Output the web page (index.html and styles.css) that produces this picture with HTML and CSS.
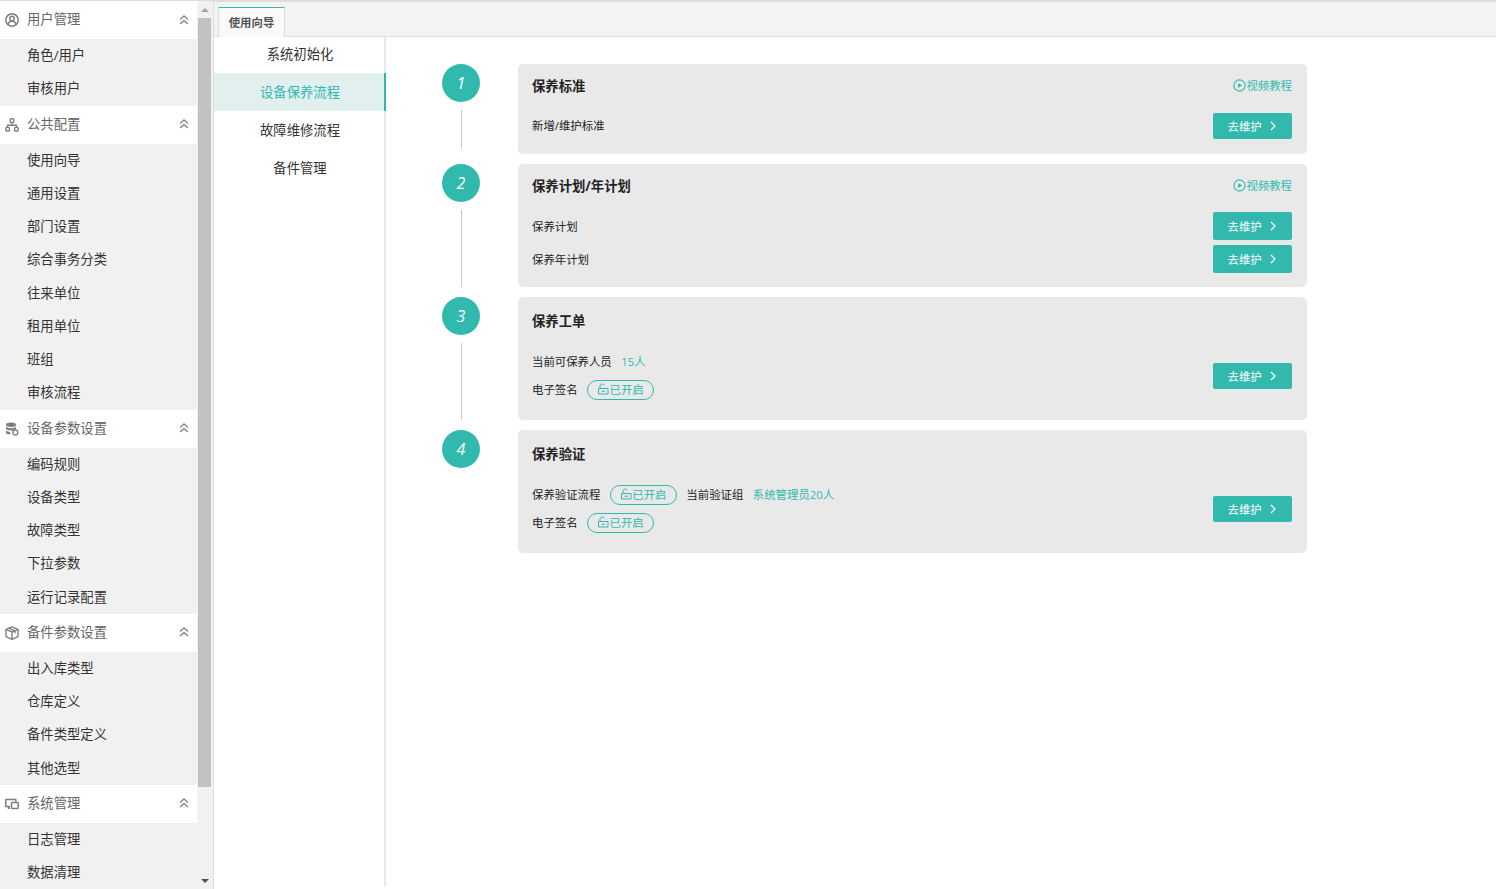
FILE: index.html
```html
<!DOCTYPE html>
<html>
<head>
    <title>使用向导</title>
    <link rel="stylesheet" href="styles.css">
</head>
<body>
    <svg class="defs">
        <symbol id="chev-up" viewBox="0 0 10 10"><path d="M1 4.500 5 1l4 3.500M1 9 5 5.500l4 3.500" fill="none" stroke="currentColor" stroke-width="1.500"/></symbol>
        <symbol id="chev-right" viewBox="0 0 6 10"><path d="M1 1l4 4-4 4" fill="none" stroke="currentColor" stroke-width="1.200"/></symbol>
        <symbol id="play" viewBox="0 0 14 14"><circle cx="7" cy="7" r="6" fill="none" stroke="currentColor" stroke-width="1.200"/><path d="M5.500 4.200 9.800 7l-4.300 2.800z" fill="currentColor"/></symbol>
        <symbol id="lock" viewBox="0 0 12 12"><path d="M3 5.500V3.200C3 1.800 4 1 5.200 1c1 0 1.800.5 2.100 1.400M1.500 5.500h9.500v5.500H1.500zM4.500 8.200h3.500" fill="none" stroke="currentColor" stroke-width="1"/></symbol>
    </svg>
    <div class="app">
        <aside class="sidebar">
            <nav class="menu">
                <div class="menu-head">
                    <svg class="menu-icon" viewBox="0 0 14 14"><circle cx="7" cy="7" r="6.200" fill="none" stroke="currentColor" stroke-width="1.500"/><circle cx="7" cy="5.500" r="2.300" fill="none" stroke="currentColor" stroke-width="1.400"/><path d="M3 12c.3-2.500 1.800-3.800 4-3.800s3.700 1.300 4 3.800" fill="none" stroke="currentColor" stroke-width="1.400"/></svg>
                    <span>用户管理</span>
                    <svg class="menu-chev"><use href="#chev-up"/></svg>
                </div>
                <a class="menu-item">角色/用户</a>
                <a class="menu-item">审核用户</a>

                <div class="menu-head">
                    <svg class="menu-icon" viewBox="0 0 14 14"><g fill="none" stroke="currentColor" stroke-width="1.400"><rect x="5.200" y=".8" width="3.600" height="3.600" rx=".8"/><rect x=".8" y="9.400" width="3.600" height="3.600" rx=".8"/><rect x="9.600" y="9.400" width="3.600" height="3.600" rx=".8"/><path d="M7 4.400v2.800M2.600 9.400V7.200h8.800v2.200"/></g></svg>
                    <span>公共配置</span>
                    <svg class="menu-chev"><use href="#chev-up"/></svg>
                </div>
                <a class="menu-item">使用向导</a>
                <a class="menu-item">通用设置</a>
                <a class="menu-item">部门设置</a>
                <a class="menu-item">综合事务分类</a>
                <a class="menu-item">往来单位</a>
                <a class="menu-item">租用单位</a>
                <a class="menu-item">班组</a>
                <a class="menu-item">审核流程</a>

                <div class="menu-head">
                    <svg class="menu-icon" viewBox="0 0 14 14"><ellipse cx="6" cy="2.800" rx="5" ry="2.200" fill="currentColor"/><path d="M1 4.600v2c0 1.200 2.200 2 5 2 .8 0 1.400 0 2-.2.600-.8 1.600-1.200 3-1.100V4.600c-.8 1-2.800 1.700-5 1.700s-4.200-.7-5-1.700zM1 8.400v2.400c0 1 1.800 1.700 4.400 1.800-.4-1-.4-1.900-.2-2.800C3.400 9.700 1.800 9.200 1 8.400z" fill="currentColor"/><circle cx="10.300" cy="10.500" r="2.500" fill="none" stroke="currentColor" stroke-width="1.300"/></svg>
                    <span>设备参数设置</span>
                    <svg class="menu-chev"><use href="#chev-up"/></svg>
                </div>
                <a class="menu-item">编码规则</a>
                <a class="menu-item">设备类型</a>
                <a class="menu-item">故障类型</a>
                <a class="menu-item">下拉参数</a>
                <a class="menu-item">运行记录配置</a>

                <div class="menu-head">
                    <svg class="menu-icon" viewBox="0 0 14 14"><g fill="none" stroke="currentColor" stroke-width="1.400" stroke-linejoin="round"><path d="M7 .8 13 3.400v7.200L7 13.300 1 10.600V3.400z"/><path d="M1 3.400 7 6l6-2.600M7 6v7.300M4 2.100l6 2.700v2.400"/></g></svg>
                    <span>备件参数设置</span>
                    <svg class="menu-chev"><use href="#chev-up"/></svg>
                </div>
                <a class="menu-item">出入库类型</a>
                <a class="menu-item">仓库定义</a>
                <a class="menu-item">备件类型定义</a>
                <a class="menu-item">其他选型</a>

                <div class="menu-head">
                    <svg class="menu-icon" viewBox="0 0 14 14"><g fill="none" stroke="currentColor" stroke-width="1.500"><path d="M5 9.500H.8V2.600h10v2.200M3.500 9.500v1.800H5"/><rect x="6.500" y="5.600" width="6.700" height="5.800" rx=".6"/></g></svg>
                    <span>系统管理</span>
                    <svg class="menu-chev"><use href="#chev-up"/></svg>
                </div>
                <a class="menu-item">日志管理</a>
                <a class="menu-item">数据清理</a>
            </nav>
            <div class="scrollbar">
                <div class="arrow arrow-up"></div>
                <div class="thumb"></div>
                <div class="arrow arrow-down"></div>
            </div>
        </aside>

        <main class="main">
            <div class="tabs">
                <div class="tab">使用向导</div>
            </div>
            <div class="workspace">
                <ul class="subnav">
                    <li>系统初始化</li>
                    <li class="active">设备保养流程</li>
                    <li>故障维修流程</li>
                    <li>备件管理</li>
                </ul>
                <div class="steps">
                    <section class="step">
                        <div class="rail"><div class="num">1</div><div class="line"></div></div>
                        <div class="card">
                            <div class="card-title"><h3>保养标准</h3><a class="video"><svg><use href="#play"/></svg>视频教程</a></div>
                            <div class="row"><span>新增/维护标准</span><button class="go">去维护<svg><use href="#chev-right"/></svg></button></div>
                        </div>
                    </section>
                    <section class="step">
                        <div class="rail"><div class="num">2</div><div class="line"></div></div>
                        <div class="card">
                            <div class="card-title"><h3>保养计划/年计划</h3><a class="video"><svg><use href="#play"/></svg>视频教程</a></div>
                            <div class="row"><span>保养计划</span><button class="go go-tall">去维护<svg><use href="#chev-right"/></svg></button></div>
                            <div class="row"><span>保养年计划</span><button class="go go-tall">去维护<svg><use href="#chev-right"/></svg></button></div>
                        </div>
                    </section>
                    <section class="step">
                        <div class="rail"><div class="num">3</div><div class="line"></div></div>
                        <div class="card">
                            <div class="card-title tall"><h3>保养工单</h3></div>
                            <div class="split">
                                <div class="info">
                                    <div class="info-row"><span>当前可保养人员</span><span class="teal">15人</span></div>
                                    <div class="info-row"><span>电子签名</span><span class="pill"><svg><use href="#lock"/></svg>已开启</span></div>
                                </div>
                                <button class="go">去维护<svg><use href="#chev-right"/></svg></button>
                            </div>
                        </div>
                    </section>
                    <section class="step">
                        <div class="rail"><div class="num">4</div></div>
                        <div class="card">
                            <div class="card-title tall"><h3>保养验证</h3></div>
                            <div class="split">
                                <div class="info">
                                    <div class="info-row"><span>保养验证流程</span><span class="pill"><svg><use href="#lock"/></svg>已开启</span><span>当前验证组</span><span class="teal">系统管理员20人</span></div>
                                    <div class="info-row"><span>电子签名</span><span class="pill"><svg><use href="#lock"/></svg>已开启</span></div>
                                </div>
                                <button class="go">去维护<svg><use href="#chev-right"/></svg></button>
                            </div>
                        </div>
                    </section>
                </div>
            </div>
        </main>
    </div>
</body>
</html>
```

FILE: styles.css
```css
:root {
    --teal: #31b9ae;
    --text: #333;
    --muted: #666;
    --line: #ddd;
}

* {
    box-sizing: border-box;
}

html, body {
    height: 100%;
}

body {
    margin: 0;
    background: #fff;
    color: var(--text);
    font-family: "Open Sans", "Noto Sans CJK SC", sans-serif;
    overflow: hidden;
}

.defs {
    display: none;
}

.app {
    display: flex;
    height: 889px;
    border-top: 1px solid var(--line);
}

/* left menu */
.sidebar {
    display: flex;
    width: 214px;
    flex: none;
    border-right: 1px solid var(--line);
}

.menu {
    width: 197px;
    flex: none;
    background: #f1f1f1;
    overflow: hidden;
}

.menu-head {
    display: flex;
    align-items: center;
    height: 38px;
    padding: 0 8px 0 5px;
    background: #fff;
    color: var(--muted);
    font-size: 13.330px;
}

.menu-head span {
    padding-bottom: 3px;
}

.menu-icon {
    width: 14px;
    height: 14px;
    margin-right: 8px;
    color: #808080;
}

.menu-chev {
    width: 10px;
    height: 10px;
    margin-left: auto;
    margin-bottom: 1px;
    color: #888;
}

.menu-item {
    display: block;
    height: 33.250px;
    line-height: 33.250px;
    padding-left: 27px;
    font-size: 13.330px;
}

.scrollbar {
    display: flex;
    flex-direction: column;
    width: 16px;
    padding-left: 1px;
    background: #f1f1f1;
}

.arrow {
    width: 0;
    height: 0;
    margin: 7px 0 6px 3px;
    border-left: 4px solid transparent;
    border-right: 4px solid transparent;
}

.arrow-up {
    border-bottom: 4px solid #a3a3a3;
}

.arrow-down {
    margin-top: auto;
    border-top: 4px solid #505050;
}

.thumb {
    width: 13px;
    height: 769px;
    background: #c1c1c1;
}

/* right side */
.main {
    flex: 1;
    display: flex;
    flex-direction: column;
    min-width: 0;
}

.tabs {
    height: 36px;
    padding: 5px 0 0 4px;
    background: #f3f3f3;
    border-top: 1px solid var(--line);
    border-bottom: 1px solid var(--line);
    flex: none;
}

.tab {
    width: 67px;
    height: 30px;
    line-height: 30px;
    text-align: center;
    background: #f9f9f9;
    border: 1px solid var(--line);
    border-top: 1px solid var(--teal);
    border-bottom: none;
    color: #555;
    font-size: 11.400px;
    font-weight: 700;
}

.workspace {
    flex: 1;
    display: flex;
    min-height: 0;
}

.subnav {
    width: 172px;
    flex: none;
    margin: -2px 0 3px;
    padding: 0;
    list-style: none;
    border-right: 2px solid #e6e6ee;
}

.subnav li {
    height: 38px;
    line-height: 38px;
    margin-right: -2px;
    text-align: center;
    font-size: 13.330px;
}

.subnav li.active {
    padding-left: 2px;
    background: #e1efee;
    border-right: 2px solid var(--teal);
    color: var(--teal);
}

.steps {
    flex: 1;
    display: flex;
    flex-direction: column;
    gap: 10px;
    padding: 27px 0 0 56px;
}

.step {
    display: flex;
}

.rail {
    display: flex;
    flex-direction: column;
    align-items: center;
    width: 38px;
    flex: none;
    margin-right: 38px;
}

.num {
    width: 38px;
    height: 38px;
    line-height: 39px;
    flex: none;
    border-radius: 50%;
    background: var(--teal);
    color: #fff;
    text-align: center;
    font-size: 16px;
    font-style: italic;
}

.line {
    flex: 1;
    width: 1px;
    margin-top: 8px;
    background: #c8c8d4;
}

.step:first-child .line {
    margin-bottom: 5px;
}

.card {
    width: 789px;
    padding: 0 15px 11.500px 14px;
    background: #e9e9e9;
    border-radius: 5px;
    font-size: 11.400px;
    color: #222;
}

.card-title {
    display: flex;
    align-items: center;
    justify-content: space-between;
    height: 45.500px;
    padding-bottom: 3px;
}

.card-title.tall {
    height: 48px;
    padding-bottom: 1px;
}

.card-title h3 {
    margin: 0;
    font-size: 13.330px;
    font-weight: 700;
}

.video {
    display: flex;
    align-items: center;
    color: var(--teal);
}

.video svg {
    width: 13px;
    height: 13px;
}

.row {
    display: flex;
    align-items: center;
    justify-content: space-between;
    height: 33px;
}

.step:first-child .row > span {
    padding-bottom: 2px;
}

.split {
    display: flex;
    align-items: center;
    justify-content: space-between;
    padding: 3px 0 4.500px;
}

.info-row {
    display: flex;
    align-items: center;
    gap: 9.500px;
    height: 28px;
}

.info-row > span {
    padding-bottom: 2px;
}

.teal {
    color: var(--teal);
}

.info-row > .pill {
    display: flex;
    align-items: center;
    justify-content: center;
    width: 67px;
    height: 20px;
    border: 1px solid var(--teal);
    border-radius: 10px;
    color: var(--teal);
}

.pill svg {
    width: 12px;
    height: 12px;
}

.go {
    display: flex;
    align-items: center;
    justify-content: space-between;
    width: 79px;
    height: 26px;
    padding: 0 16px 1px 14.500px;
    border: none;
    border-radius: 2px;
    background: var(--teal);
    color: #fff;
    font-family: inherit;
    font-size: 11.400px;
}

.go-tall {
    height: 28.500px;
    padding-bottom: 0;
}

.go svg {
    width: 6px;
    height: 10px;
}
```
